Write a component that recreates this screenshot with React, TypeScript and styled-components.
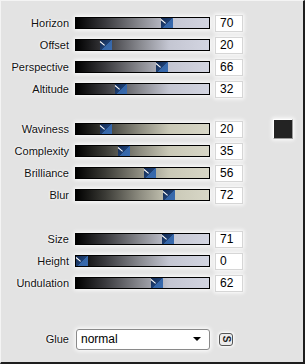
import React from "react";
import styled, { createGlobalStyle } from "styled-components";

const GlobalStyle = createGlobalStyle`
  html, body {
    margin: 0;
    padding: 0;
    background: #e3e3e3;
  }
  body {
    font-family: "Liberation Sans", Arial, sans-serif;
  }
`;

type Tone = "blue" | "sand";

const sliders: { label: string; value: number }[][] = [
  [
    { label: "Horizon", value: 70 },
    { label: "Offset", value: 20 },
    { label: "Perspective", value: 66 },
    { label: "Altitude", value: 32 },
  ],
  [
    { label: "Waviness", value: 20 },
    { label: "Complexity", value: 35 },
    { label: "Brilliance", value: 56 },
    { label: "Blur", value: 72 },
  ],
  [
    { label: "Size", value: 71 },
    { label: "Height", value: 0 },
    { label: "Undulation", value: 62 },
  ],
];

const tones: Tone[] = ["blue", "sand", "blue"];
const groupTops = [11, 18, 22];

const App = () => {
  return (
    <>
      <GlobalStyle />
      <Panel>
        {sliders.map((group, gi) => (
          <Group key={gi} $top={groupTops[gi]}>
            {group.map((s, i) => (
              <Row key={s.label}>
                <Label>{s.label}</Label>
                <Track $tone={tones[gi]}>
                  <Thumb style={{ left: `${(s.value / 100) * 121}px` }} />
                </Track>
                <ValueBox>{s.value}</ValueBox>
                {gi === 1 && i === 0 && <Swatch />}
              </Row>
            ))}
          </Group>
        ))}
        <GlueRow>
          <Label>Glue</Label>
          <Select>
            <span>normal</span>
            <Arrow />
          </Select>
          <SmallButton>
            <span>S</span>
          </SmallButton>
        </GlueRow>
      </Panel>
    </>
  );
};

const Panel = styled.div`
  width: 305px;
  height: 364px;
  box-sizing: border-box;
  background: #e3e3e3;
  border-top: 1px solid #f4f4f4;
  border-left: 1px solid #f4f4f4;
  border-right: 2px solid #1e1e1e;
  border-bottom: 2px solid #1e1e1e;
  display: flex;
  flex-direction: column;
`;

const Group = styled.div<{ $top: number }>`
  margin-top: ${(p) => p.$top}px;
  display: flex;
  flex-direction: column;
`;

const Row = styled.div`
  height: 22px;
  display: flex;
  align-items: center;
`;

const Label = styled.div`
  width: 68px;
  text-align: right;
  font-size: 11px;
  color: #111;
  text-shadow: 0 0 3px #fff, 0 0 2px #fff;
  white-space: nowrap;
`;

const Track = styled.div<{ $tone: Tone }>`
  position: relative;
  margin-left: 6px;
  width: 135px;
  height: 12px;
  box-sizing: border-box;
  border: 1px solid #000;
  background: ${(p) =>
    p.$tone === "blue"
      ? "linear-gradient(to right, #000 0%, #3a3a3e 22%, #88898f 48%, #c4c6d2 70%, #d3d5e1 100%)"
      : "linear-gradient(to right, #000 0%, #3b3b36 22%, #8d8c80 48%, #c9c8b6 70%, #d8d7c7 100%)"};
  box-shadow: 0 0 4px 1px #fff;
`;

const Thumb = styled.div`
  position: absolute;
  top: 0;
  width: 12px;
  height: 10px;
  background: linear-gradient(135deg, #12284e 0%, #1e3f72 50%, #3566a8 51%, #3a6cb0 100%);

  &::before {
    content: "";
    position: absolute;
    left: 0;
    top: 1px;
    width: 6px;
    height: 1px;
    background: #fff;
    transform: rotate(40deg);
    transform-origin: left center;
  }
`;

const ValueBox = styled.div`
  margin-left: 5px;
  width: 28px;
  height: 17px;
  box-sizing: border-box;
  background: #fff;
  border: 1px solid #d6d6d6;
  padding-left: 4px;
  font-size: 12px;
  line-height: 15px;
  color: #000;
  box-shadow: 0 0 4px 1px #fff;
`;

const Swatch = styled.div`
  margin-left: 30px;
  width: 20px;
  height: 20px;
  box-sizing: border-box;
  background: #232323;
  border-top: 1px solid #fff;
  border-left: 1px solid #fff;
  border-right: 1px solid #9a9a9a;
  border-bottom: 1px solid #9a9a9a;
  box-shadow: 0 0 4px 1px #fff;
`;

const GlueRow = styled.div`
  margin-top: 34px;
  height: 22px;
  display: flex;
  align-items: center;
`;

const Select = styled.div`
  margin-left: 7px;
  width: 134px;
  height: 21px;
  box-sizing: border-box;
  background: #fff;
  border: 1px solid #8a8a8a;
  border-radius: 3px;
  display: flex;
  align-items: center;
  justify-content: space-between;
  padding: 0 8px 0 4px;
  font-size: 12px;
  color: #000;
  box-shadow: 0 0 4px 1px #fff;
`;

const Arrow = styled.div`
  width: 0;
  height: 0;
  border-left: 4px solid transparent;
  border-right: 4px solid transparent;
  border-top: 4px solid #000;
`;

const SmallButton = styled.div`
  margin-left: 9px;
  width: 14px;
  height: 13px;
  box-sizing: border-box;
  border: 1px solid #555;
  border-radius: 3px;
  background: #ececec;
  display: flex;
  align-items: center;
  justify-content: center;
  font-size: 10px;
  font-weight: bold;
  color: #222;
  box-shadow: 0 0 3px 1px #fff;

  span {
    display: block;
    transform: rotate(90deg);
    line-height: 10px;
  }
`;

export default App;
